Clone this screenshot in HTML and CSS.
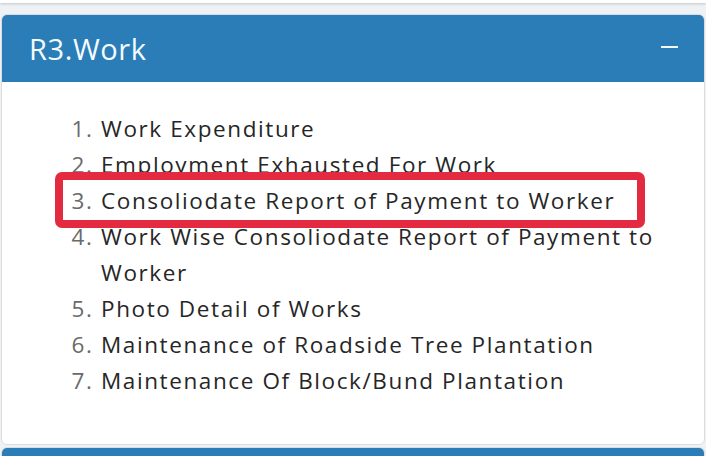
FILE: index.html
```html
<!DOCTYPE html>
<html lang="en">
<head>
<meta charset="utf-8">
<title>R3.Work</title>
<link rel="stylesheet" href="styles.css">
</head>
<body>
<div class="prev-card"></div>
<section class="card">
  <header class="card-header">
    <h3 class="card-title">R3.Work</h3>
    <span class="collapse-btn" aria-label="Collapse"></span>
  </header>
  <div class="card-body">
    <ol class="report-list">
      <li>Work Expenditure</li>
      <li>Employment Exhausted For Work</li>
      <li class="highlighted">Consoliodate Report of Payment to Worker<span class="highlight-box"></span></li>
      <li>Work Wise Consoliodate Report of Payment to Worker</li>
      <li>Photo Detail of Works</li>
      <li>Maintenance of Roadside Tree Plantation</li>
      <li>Maintenance Of Block/Bund Plantation</li>
    </ol>
  </div>
</section>
<section class="card next-card">
  <header class="next-header"></header>
</section>
</body>
</html>
```

FILE: styles.css
```css
html, body {
  margin: 0;
  padding: 0;
}
body {
  background: #eef2f5;
  font-family: "Open Sans", Roboto, "Noto Sans", Arial, sans-serif;
  width: 706px;
  height: 456px;
  overflow: hidden;
}
.prev-card {
  height: 3px;
  background: #ffffff;
  box-shadow: 0 1px 3px rgba(0,0,0,0.18);
}
.card {
  margin: 11px 1px 0 1px;
  border: 1px solid #d9dde1;
  border-radius: 6px;
  background: #ffffff;
  overflow: hidden;
}
.card-header {
  height: 67px;
  background: #2b7db7;
  display: flex;
  align-items: center;
  justify-content: space-between;
  padding: 0 26px 0 27px;
}
.card-title {
  margin: 0;
  font-weight: 400;
  font-size: 29px;
  letter-spacing: 0.6px;
  color: #f4fbff;
}
.collapse-btn {
  width: 17px;
  height: 2px;
  background: #f2f8fc;
  margin-bottom: 4px;
}
.card-body {
  padding: 29px 16px 45px 0;
}
.report-list {
  margin: 0;
  padding-left: 99px;
  font-size: 22.5px;
  line-height: 36px;
  letter-spacing: 1.6px;
  color: #262626;
}
.report-list li::marker {
  color: #6a6a6a;
}
.highlighted {
  position: relative;
}
.highlight-box {
  position: absolute;
  left: -46px;
  top: -11px;
  width: 574px;
  height: 40px;
  border: 8px solid #e32a40;
  border-radius: 7px;
}
.next-card {
  margin-top: 2px;
  border-bottom: 0;
  border-radius: 6px 6px 0 0;
}
.next-header {
  height: 10px;
  background: #2b7db7;
}
```
